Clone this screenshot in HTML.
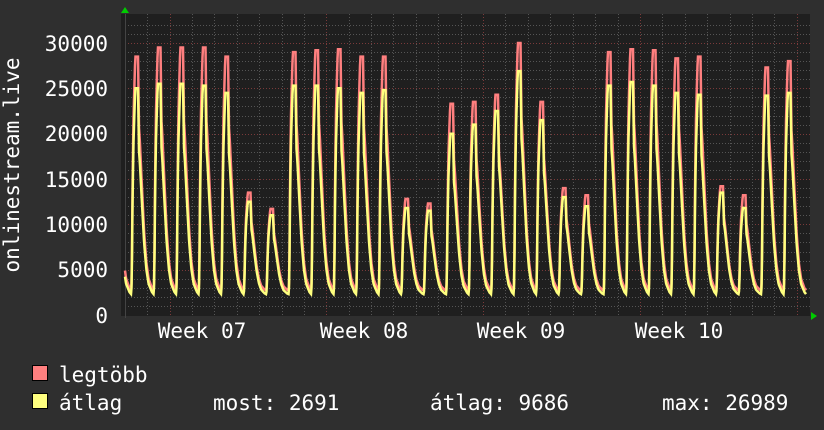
<!DOCTYPE html>
<html><head><meta charset="utf-8"><style>
html,body{margin:0;padding:0;background:#2f2f2f;}
body{width:824px;height:430px;overflow:hidden;position:relative;font-family:"DejaVu Sans Mono","Liberation Mono",monospace;color:#fff;}
svg{position:absolute;left:0;top:0;}
</style></head><body>
<svg id="g" width="824" height="430" xmlns="http://www.w3.org/2000/svg" font-family="DejaVu Sans Mono, Liberation Mono, monospace" font-size="21" fill="#fff">
<rect x="0" y="0" width="824" height="430" fill="#2f2f2f"/>
<rect x="121" y="14" width="689" height="302" fill="#1f1f1f"/>
<g id="grid"></g>
<g id="data"></g>
<polygon points="121,13 125,7 129,13" fill="#00cc00"/>
<polygon points="811,312 817,316 811,320" fill="#00cc00"/>
<g text-anchor="end">
<text x="108" y="51">30000</text>
<text x="108" y="96">25000</text>
<text x="108" y="141">20000</text>
<text x="108" y="187">15000</text>
<text x="108" y="232">10000</text>
<text x="108" y="277">5000</text>
<text x="108" y="323">0</text>
</g>
<text transform="translate(19,165) rotate(-90)" text-anchor="middle">onlinestream.live</text>
<g text-anchor="middle">
<text x="202" y="338">Week 07</text>
<text x="364" y="338">Week 08</text>
<text x="521" y="338">Week 09</text>
<text x="679" y="338">Week 10</text>
</g>
<rect x="32.5" y="365.5" width="15" height="15" fill="#ff7f7f" stroke="#000"/>
<rect x="32.5" y="393.5" width="15" height="15" fill="#ffff7f" stroke="#000"/>
<text x="59" y="382">legtöbb</text>
<text x="59" y="410">átlag</text>
<text x="213" y="410">most: 2691</text>
<text x="430" y="410">átlag: 9686</text>
<text x="662" y="410">max: 26989</text>
</svg>
<script>
(function(){
var NS="http://www.w3.org/2000/svg";
var grid=document.getElementById('grid'),data=document.getElementById('data');
function Y(v){return 315-v*(272/30000);}
function line(x1,y1,x2,y2,c){var l=document.createElementNS(NS,'line');l.setAttribute('x1',x1);l.setAttribute('y1',y1);l.setAttribute('x2',x2);l.setAttribute('y2',y2);l.setAttribute('stroke',c);l.setAttribute('stroke-width',1);l.setAttribute('stroke-dasharray','1,2');grid.appendChild(l);}
for(var v=1000;v<=32000;v+=1000){var y=Math.round(Y(v))+0.5;if(y<14)break;line(125,y,810,y,v%5000==0?'#7a3a3a':'#555');}
for(var i=0;i<31;i++){var x=Math.round(124.7+22.4*i)+0.5;if(x>809)break;var maj=((i-2)%7==0);line(x,14,x,316,maj?'#7a3a3a':'#555');}
var bl=document.createElementNS(NS,'line');bl.setAttribute('x1',125.5);bl.setAttribute('y1',14);bl.setAttribute('x2',125.5);bl.setAttribute('y2',318);bl.setAttribute('stroke','#444');grid.appendChild(bl);
var mx=[28.5,29.5,29.5,29.5,28.5,13.5,11.7,29,29.2,29.3,28.5,28.5,12.8,12.3,23.3,23.5,24.3,30,23.5,14,13.2,29,29.3,29.2,28.3,28.5,14.2,13.2,27.3,28];
var av=[25,25.5,25.5,25.3,24.5,12.5,11,25.3,25.3,25,24.5,24.8,11.8,11.5,20,21,22.5,26.9,21.5,13,12,25.3,25.7,25.3,24.5,24.3,13.5,11.8,24.2,24.5];
var K=[[0.27,0],[0.30,0.05],[0.34,0.5],[0.38,0.75],[0.44,0.95],[0.46,1],[0.58,1],[0.62,0.7],[0.66,0.64],[0.75,0.45],[0.85,0.25],[0.95,0.12],[1.05,0.05],[1.2,0.01],[1.27,0]];
function f(u){for(var k=1;k<K.length;k++){if(u<=K[k][0]){var a=K[k-1],b=K[k];return a[1]+(b[1]-a[1])*(u-a[0])/(b[0]-a[0]);}}return 0;}
var P=22.5,S=125.0;
function path(arr,base){var d='';for(var x=125;x<=806;x+=0.5){var t=(x-S)/P-0.27;var i=Math.floor(t);var u=t-i+0.27;if(i<0)i=0;if(i>29){i=29;u=1.27;}var p=arr[i]*1000;var v=base+(p-base)*f(u);d+=(d?'L':'M')+x.toFixed(1)+','+Y(v).toFixed(1);}return d;}
var dr=path(mx,2700),dy=path(av,2300);
var r=document.createElementNS(NS,'path');r.setAttribute('d',dr);r.setAttribute('fill','none');r.setAttribute('stroke','#ff7f7f');r.setAttribute('stroke-width',2.5);data.appendChild(r);
var yl=document.createElementNS(NS,'path');yl.setAttribute('d',dy);yl.setAttribute('fill','none');yl.setAttribute('stroke','#ffff7f');yl.setAttribute('stroke-width',2.5);data.appendChild(yl);
})();
</script>
</body></html>
